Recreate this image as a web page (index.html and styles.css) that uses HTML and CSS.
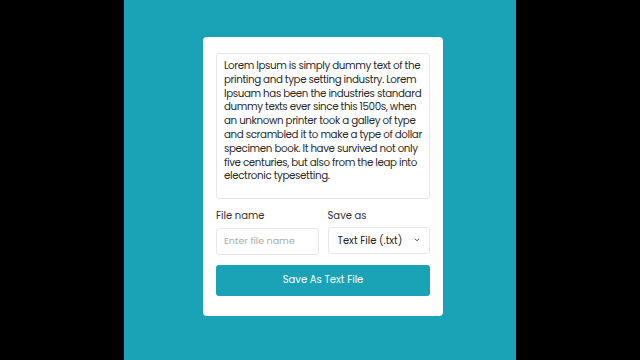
FILE: index.html
```html
<!DOCTYPE html>
<html lang="en">
<head>
    <meta charset="UTF-8">
    <meta name="viewport" content="width=device-width, initial-scale=1.0">
    <title>Save Text As File</title>
    <link rel="stylesheet" href="styles.css">
</head>
<body>
    <div class="stage">
        <div class="wrapper">
            <textarea class="text-box" spellcheck="false" wrap="off">Lorem Ipsum is simply dummy text of the
printing and type setting industry. Lorem
Ipsuam has been the industries standard
dummy texts ever since this 1500s, when
an unknown printer took a galley of type
and scrambled it to make a type of dollar
specimen book. It have survived not only
five centuries, but also from the leap into
electronic typesetting.</textarea>
            <div class="file-options">
                <div class="option">
                    <label for="file-name">File name</label>
                    <input type="text" id="file-name" placeholder="Enter file name">
                </div>
                <div class="option">
                    <label for="save-as">Save as</label>
                    <div class="select-box">
                        <select id="save-as">
                            <option>Text File (.txt)</option>
                        </select>
                        <svg class="chevron" width="6" height="6" viewBox="0 0 6 6">
                            <path d="M1.2 2 L3 3.8 L4.8 2" fill="none" stroke="#444" stroke-width="1" stroke-linecap="round"/>
                        </svg>
                    </div>
                </div>
            </div>
            <button class="save-btn">Save As Text File</button>
        </div>
    </div>
</body>
</html>
```

FILE: styles.css
```css
/* Reset and base styles */
* {
    margin: 0;
    padding: 0;
    box-sizing: border-box;
    font-family: 'Poppins', 'Lato', sans-serif;
}

body {
    background-color: #000;
    height: 100vh;
}

.stage {
    width: 392px;
    height: 360px;
    margin: 0 auto;
    background-color: #1aa2b6;
    padding: 37px 0 0 79px;
}

.wrapper {
    width: 240px;
    height: 279px;
    background-color: #fff;
    border-radius: 4px;
    padding: 16px 13px 0;
}

.text-box {
    display: block;
    width: 214px;
    height: 146px;
    resize: none;
    overflow: hidden;
    border: 1px solid #e8e8e8;
    border-radius: 3px;
    padding: 5px 2px 5px 7px;
    font-size: 10.3px;
    letter-spacing: -0.38px;
    line-height: 13.8px;
    color: #2a2a2a;
    outline: none;
}

.file-options {
    display: flex;
    gap: 9px;
    margin-top: 10px;
}

.option {
    flex: 1;
}

.option label {
    display: block;
    font-size: 10px;
    line-height: 14px;
    color: #333;
    margin-bottom: 3px;
}

.option input,
.option select {
    width: 100%;
    height: 27px;
    border: 1px solid #e8e8e8;
    border-radius: 3px;
    font-size: 9.5px;
    padding: 0 7px;
    outline: none;
    background: #fff;
    color: #333;
}

.option select {
    appearance: none;
    padding: 0 9px;
    font-size: 10px;
    color: #222;
}

.option input::placeholder {
    color: #aaa;
}

.select-box {
    position: relative;
}

.chevron {
    position: absolute;
    right: 10px;
    top: 11px;
}

.save-btn {
    display: block;
    width: 100%;
    height: 31px;
    margin-top: 10px;
    border: none;
    border-radius: 3px;
    background-color: #1aa2b6;
    color: #fff;
    font-size: 10px;
    cursor: pointer;
}
```
